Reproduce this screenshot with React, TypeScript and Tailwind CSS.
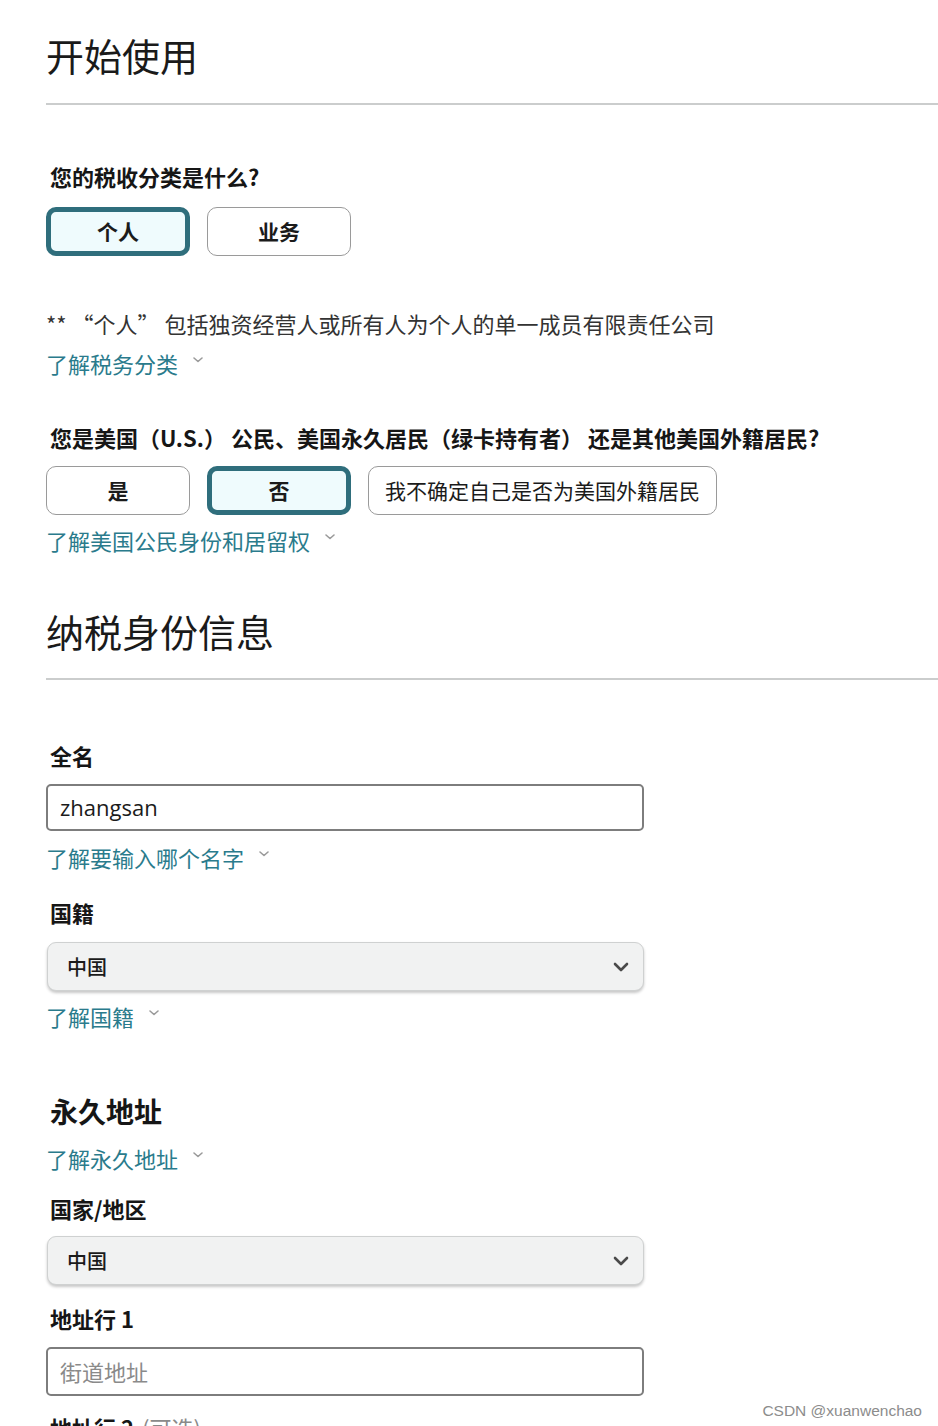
import { ReactNode } from 'react';

const FONT = { fontFamily: '"Noto Sans CJK SC", "Noto Sans", sans-serif' };

function Chevron({ className = '' }: { className?: string }) {
  return (
    <svg width="12" height="8" viewBox="0 0 12 8" fill="none" className={className}>
      <path d="M2 2l4 3.5L10 2" stroke="#9a9a9a" strokeWidth="1.6" strokeLinecap="round" strokeLinejoin="round" />
    </svg>
  );
}

function LearnLink({ children, className = '' }: { children: ReactNode; className?: string }) {
  return (
    <div className={`flex items-center gap-[14px] text-[22px] leading-[30px] text-[#2a7b8c] ${className}`}>
      <span>{children}</span>
      <Chevron className="-mt-[6px]" />
    </div>
  );
}

function Choice({
  label,
  selected = false,
  bold = true,
  width = 'w-[144px]',
}: {
  label: string;
  selected?: boolean;
  bold?: boolean;
  width?: string;
}) {
  return (
    <button
      type="button"
      className={`${width} h-[49px] rounded-[10px] text-[21px] text-[#1b1b1b] flex items-center justify-center ${
        selected ? 'border-[5px] border-[#2f6e7c] bg-[#effbfd]' : 'border border-[#9a9a9a] bg-white'
      } ${bold ? 'font-bold' : 'font-normal'}`}
    >
      {label}
    </button>
  );
}

function Label({ children, className = '' }: { children: ReactNode; className?: string }) {
  return <div className={`pl-1 text-[22px] leading-[30px] font-bold text-[#161616] ${className}`}>{children}</div>;
}

function SelectBox({ value, className = '' }: { value: string; className?: string }) {
  return (
    <div
      className={`w-[597px] h-[49px] ml-px rounded-[9px] border border-[#cfd1d1] bg-[#f1f2f2] shadow-[0_2px_3px_rgba(0,0,0,0.22)] flex items-center justify-between pl-[19px] pr-[14px] ${className}`}
    >
      <span className="text-[20px] font-medium text-[#1b1b1b]">{value}</span>
      <svg width="16" height="10" viewBox="0 0 16 10" fill="none">
        <path d="M2 2l6 6 6-6" stroke="#4a4a4a" strokeWidth="2.6" strokeLinecap="round" strokeLinejoin="round" />
      </svg>
    </div>
  );
}

function TextBox({ value, placeholder, className = '' }: { value?: string; placeholder?: string; className?: string }) {
  return (
    <div
      className={`w-[598px] rounded-[5px] border-2 border-[#7d7d7d] bg-white flex items-center px-[12px] text-[22px] ${className}`}
    >
      {value ? (
        <span className="text-[#1b1b1b]" style={{ fontFamily: '"Open Sans", "Noto Sans", sans-serif' }}>
          {value}
        </span>
      ) : (
        <span className="text-[#8a8a8a]">{placeholder}</span>
      )}
    </div>
  );
}

export default function App() {
  return (
    <div className="relative w-[938px] h-[1426px] overflow-hidden bg-white" style={FONT}>
      <div className="pl-[46px]">
        <h1 className="mt-[32px] text-[38px] leading-[46px] font-normal text-[#1a1a1a]">开始使用</h1>
        <div className="mt-[25px] h-[2px] bg-[#cbcdcd]" />

        <Label className="mt-[56px]">您的税收分类是什么?</Label>
        <div className="mt-[16px] flex gap-[17px]">
          <Choice label="个人" selected />
          <Choice label="业务" />
        </div>

        <p className="mt-[52px] text-[22px] leading-[30px] text-[#333]">
          ** “个人” 包括独资经营人或所有人为个人的单一成员有限责任公司
        </p>
        <LearnLink className="mt-[10px]">了解税务分类</LearnLink>

        <Label className="mt-[44px]">您是美国（U.S.） 公民、美国永久居民（绿卡持有者） 还是其他美国外籍居民?</Label>
        <div className="mt-[14px] flex gap-[17px]">
          <Choice label="是" />
          <Choice label="否" selected />
          <Choice label="我不确定自己是否为美国外籍居民" bold={false} width="w-[349px]" />
        </div>
        <LearnLink className="mt-[10px]">了解美国公民身份和居留权</LearnLink>

        <h1 className="mt-[53px] text-[38px] leading-[46px] font-normal text-[#1a1a1a]">纳税身份信息</h1>
        <div className="mt-[24px] h-[2px] bg-[#cbcdcd]" />

        <Label className="mt-[60px]">全名</Label>
        <TextBox className="mt-[14px] h-[47px]" value="zhangsan" />
        <LearnLink className="mt-[11px]">了解要输入哪个名字</LearnLink>

        <Label className="mt-[25px]">国籍</Label>
        <SelectBox className="mt-[15px]" value="中国" />
        <LearnLink className="mt-[10px]">了解国籍</LearnLink>

        <div className="mt-[62px] pl-1 text-[28px] leading-[36px] font-bold text-[#161616]">永久地址</div>
        <LearnLink className="mt-[14px]">了解永久地址</LearnLink>

        <Label className="mt-[20px]">国家/地区</Label>
        <SelectBox className="mt-[13px]" value="中国" />

        <Label className="mt-[18px]">地址行 1</Label>
        <TextBox className="mt-[14px] h-[49px]" placeholder="街道地址" />

        <div className="mt-[16px] pl-1 text-[22px] leading-[30px]">
          <span className="font-bold text-[#161616]">地址行 2</span>
          <span className="ml-2 text-[#8a8a8a]">(可选)</span>
        </div>
      </div>

      <div
        className="absolute right-[16px] top-[1399px] text-[15.5px] text-[#8c8c8c]"
        style={{ fontFamily: '"Liberation Sans", Arial, sans-serif' }}
      >
        CSDN @xuanwenchao
      </div>
    </div>
  );
}
